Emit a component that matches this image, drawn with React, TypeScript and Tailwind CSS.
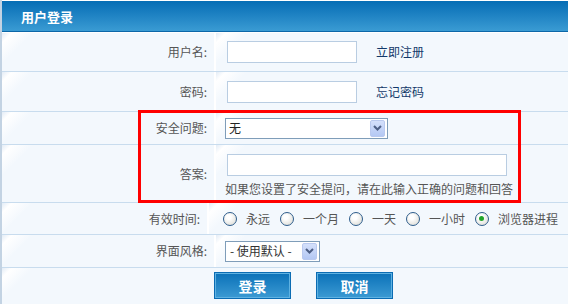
const cell =
  'bg-[#f3f8fd] bg-[linear-gradient(135deg,#e3ecf6_0px,#ffffff_7px,#f3f8fd_22px)]'

function SelectArrow() {
  return (
    <span className="flex h-[17px] w-[15px] items-center justify-center rounded-[2px] border border-[#b9c9ef] bg-[linear-gradient(#d4e0fb,#b4c8f4)]">
      <svg width="9" height="6" viewBox="0 0 9 6">
        <path d="M1 1 L4.5 4.5 L8 1" fill="none" stroke="#4d5f86" strokeWidth="2" />
      </svg>
    </span>
  )
}

function Radio({ checked }: { checked?: boolean }) {
  return (
    <span className="flex h-[14px] w-[14px] items-center justify-center rounded-full border border-[#2e5d8c] bg-[radial-gradient(circle_at_40%_35%,#ffffff_20%,#d6d6cf)]">
      {checked && <span className="h-[5px] w-[5px] rounded-full bg-[#22a52a]" />}
    </span>
  )
}

function Row({ label, height, children }: { label: string; height: string; children: React.ReactNode }) {
  return (
    <div className={`flex border-b border-[#c8dcee] ${height}`}>
      <div className={`flex w-[212px] items-center justify-end pr-[7px] text-[#555] ${cell}`}>{label}</div>
      <div className="w-[2px] bg-white" />
      <div className={`flex flex-1 items-center ${cell}`}>{children}</div>
    </div>
  )
}

const times = ['永远', '一个月', '一天', '一小时', '浏览器进程']

export default function App() {
  return (
    <div
      className="relative h-[304px] w-[568px] overflow-hidden border-l-2 border-[#c3d3e3] bg-white text-[12px] leading-none"
      style={{ fontFamily: '"Noto Sans CJK SC", "Noto Sans", sans-serif' }}
    >
      <div className="mt-px flex h-[31px] items-center border-b border-[#0c67a8] bg-[linear-gradient(#066db5,#3a9bd3)] pl-[19px] text-[13px] font-bold text-white">
        用户登录
      </div>
      <div className="h-px bg-white" />

      <Row label="用户名:" height="h-[39px]">
        <input className="ml-[11px] h-[22px] w-[130px] border border-[#b9cde2] bg-white outline-none" />
        <a className="ml-[19px] text-[#12386a]">立即注册</a>
      </Row>
      <Row label="密码:" height="h-[40px]">
        <input type="password" className="ml-[11px] h-[22px] w-[130px] border border-[#b9cde2] bg-white outline-none" />
        <a className="ml-[19px] text-[#12386a]">忘记密码</a>
      </Row>
      <Row label="安全问题:" height="h-[33px]">
        <div className="ml-[9px] flex h-[21px] w-[163px] items-center justify-between border border-[#7f9db9] bg-white pl-[3px] pr-[2px] text-[#222]">
          <span>无</span>
          <SelectArrow />
        </div>
      </Row>
      <Row label="答案:" height="h-[58px]">
        <div className="flex flex-col pt-[2px]">
          <input className="ml-[11px] h-[22px] w-[280px] border border-[#b9cde2] bg-white outline-none" />
          <span className="ml-[9px] mt-[7px] text-[#555]">如果您设置了安全提问，请在此输入正确的问题和回答</span>
        </div>
      </Row>
      <Row label="有效时间:" height="h-[32px]">
        <div className="ml-[14px] flex items-center text-[#555]">
          {times.map((t, i) => (
            <span key={t} className="mr-[10px] flex items-center gap-[9px]">
              <Radio checked={i === 4} />
              <span className="whitespace-nowrap">{t}</span>
            </span>
          ))}
        </div>
      </Row>
      <Row label="界面风格:" height="h-[33px]">
        <div className="ml-[9px] flex h-[21px] w-[95px] items-center justify-between border border-[#7f9db9] bg-white pl-[4px] pr-[2px] text-[#333]">
          <span>- 使用默认 -</span>
          <SelectArrow />
        </div>
      </Row>

      <div className={`flex h-[40px] gap-[25px] pl-[212px] pt-[4px] ${cell}`}>
        {['登录', '取消'].map((b) => (
          <button
            key={b}
            className="h-[27px] w-[77px] border border-[#0b6cb3] bg-[linear-gradient(#0a71b8,#3c9ad3)] text-[14px] font-bold text-white shadow-[inset_0_0_0_1px_#5fb2e2]"
          >
            {b}
          </button>
        ))}
      </div>

      <div className="absolute left-[136px] top-[110px] h-[93px] w-[383px] border-[3px] border-[#ff0000]" />
    </div>
  )
}
